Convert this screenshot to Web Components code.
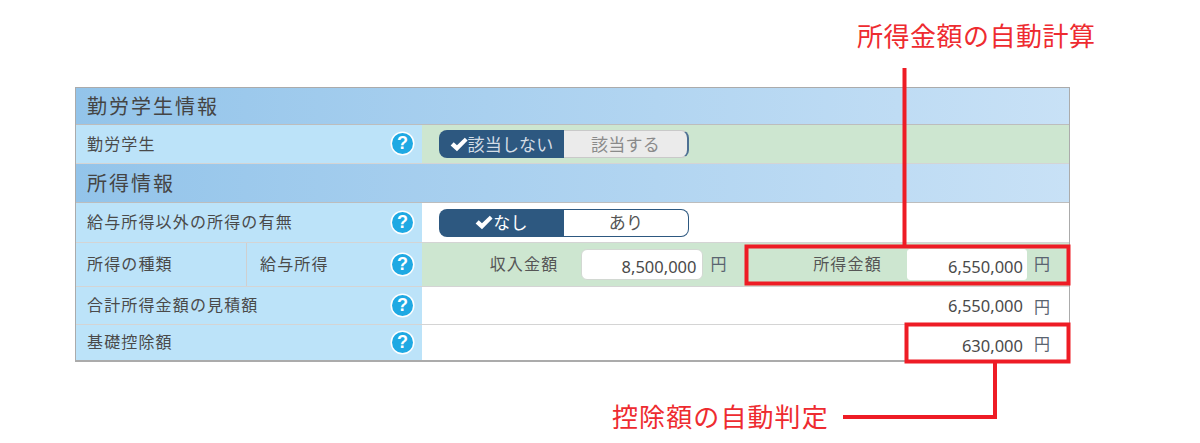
<!DOCTYPE html>
<html lang="ja">
<head>
<meta charset="utf-8">
<title>所得情報</title>
<style>
  html, body { margin: 0; background: #fff; }
  body { font-family: "Noto Sans CJK JP", "Noto Sans", sans-serif; color: #4a4a4a; overflow: hidden; }
</style>
</head>
<body>
<info-page>
  <info-table>
    <section-head style="--h:37px">勤労学生情報</section-head>
    <form-row style="--h:39px" tone="green">
      <span slot="label">勤労学生</span>
      <toggle-pair on="該当しない" off="該当する" muted></toggle-pair>
    </form-row>
    <section-head style="--h:39px">所得情報</section-head>
    <form-row style="--h:40px">
      <span slot="label">給与所得以外の所得の有無</span>
      <toggle-pair on="なし" off="あり"></toggle-pair>
    </form-row>
    <form-row style="--h:44px" tone="green" split>
      <span slot="label">所得の種類</span>
      <span slot="sub">給与所得</span>
      <money-input label="収入金額" value="8,500,000"></money-input>
      <money-input label="所得金額" value="6,550,000" flat></money-input>
    </form-row>
    <form-row style="--h:38px">
      <span slot="label">合計所得金額の見積額</span>
      <money-value value="6,550,000"></money-value>
    </form-row>
    <form-row style="--h:35px" last>
      <span slot="label">基礎控除額</span>
      <money-value value="630,000" low></money-value>
    </form-row>
  </info-table>
  <call-marks></call-marks>
  <call-label style="left:857px;top:16px;letter-spacing:.5px">所得金額の自動計算</call-label>
  <call-label style="left:612px;top:397px;letter-spacing:1.1px">控除額の自動判定</call-label>
</info-page>

<script>
class infoPage extends HTMLElement {
    constructor() {
        super();
        this.attachShadow({mode: "open"}).innerHTML = `
            <style>
                :host { display: block; position: relative; width: 1200px; height: 443px; box-sizing: border-box; padding: 87px 0 0 75px; }
            </style>
            <slot></slot>
        `;
    }
}

class infoTable extends HTMLElement {
    constructor() {
        super();
        this.attachShadow({mode: "open"}).innerHTML = `
            <style>
                :host { display: flex; flex-direction: column; width: 995px; box-sizing: border-box; border: 1px solid #ababab; border-bottom-width: 2px; }
            </style>
            <slot></slot>
        `;
    }
}

class sectionHead extends HTMLElement {
    constructor() {
        super();
        this.attachShadow({mode: "open"}).innerHTML = `
            <style>
                :host {
                    display: flex; align-items: center; height: var(--h); box-sizing: border-box;
                    padding: 0 0 2px 11px; font-size: 20px; letter-spacing: 2px; color: #444;
                    background: linear-gradient(90deg, #93c4ea, #c8e1f6);
                    border-bottom: 1px solid #bdbdbd;
                }
            </style>
            <slot></slot>
        `;
    }
}

class formRow extends HTMLElement {
    constructor() {
        super();
        this.attachShadow({mode: "open"}).innerHTML = `
            <style>
                :host {
                    display: grid; grid-template-columns: 346px 1fr; height: var(--h); box-sizing: border-box;
                    border-bottom: 1px solid #d4d4d4; font-size: 16px; letter-spacing: 1.15px;
                }
                :host([last]) { border-bottom: 0; }
                .head { display: flex; align-items: center; background: #bce3f9; color: #4a4a4a; }
                .main { flex: 1; padding: 0 0 3px 11px; }
                .sub { display: none; width: 128px; align-self: stretch; align-items: center; padding: 0 0 3px 13px; border-left: 1px solid #cfcfcf; }
                :host([split]) .sub { display: flex; }
                :host([split]) .main { flex: none; width: 159px; }
                help-mark { margin: 0 9px 1px auto; }
                .body { display: grid; align-items: center; background: #fff; }
                :host([split]) .body { grid-template-columns: 1fr 1fr; }
                :host([tone="green"]) .body { background: #cde6d0; }
            </style>
            <div class="head">
                <div class="main"><slot name="label"></slot></div>
                <div class="sub"><slot name="sub"></slot></div>
                <help-mark></help-mark>
            </div>
            <div class="body"><slot></slot></div>
        `;
    }
}

class helpMark extends HTMLElement {
    constructor() {
        super();
        this.attachShadow({mode: "open"}).innerHTML = `
            <style>
                :host {
                    display: flex; align-items: center; justify-content: center; width: 21px; height: 21px;
                    border-radius: 50%; background: #1fa9e3; box-shadow: 0 0 0 1.5px #fff;
                    font: bold 18px/21px "Liberation Sans", sans-serif; color: #fff; letter-spacing: 0;
                }
            </style>
            ?
        `;
    }
}

class togglePair extends HTMLElement {
    constructor() {
        super();
        this.attachShadow({mode: "open"}).innerHTML = `
            <style>
                :host {
                    display: flex; width: 250px; height: 28px; margin-left: 17px; box-sizing: border-box;
                    font-size: 17px; letter-spacing: 0.2px; line-height: 1;
                }
                div { display: flex; align-items: center; justify-content: center; width: 125px; box-sizing: border-box; }
                .on { background: #2d5880; color: #fff; border-radius: 8px 0 0 8px; }
                .off {
                    flex: 1; background: #fff; color: #555; border: 1px solid #2d5880; border-left: 0;
                    border-radius: 0 8px 8px 0;
                }
                span { position: relative; top: -1px; }
                :host([muted]) .on span { color: #d4dde6; }
                :host([muted]) .off {
                    background: #ebebeb; color: #8a8a8a; border-color: #c9c9c9; border-right: 2px solid #4d7093;
                }
            </style>
            <div class="on">
                <svg width="18" height="15" viewBox="0 0 17 14"><path d="M0.6 8 L3.5 4.8 L6.6 7.6 L14 0.6 L16.6 3.2 L6.6 13.4 Z" fill="#fff"/></svg>
                <span>${this.getAttribute("on")}</span>
            </div>
            <div class="off"><span>${this.getAttribute("off")}</span></div>
        `;
    }
}

class moneyInput extends HTMLElement {
    constructor() {
        super();
        this.attachShadow({mode: "open"}).innerHTML = `
            <style>
                :host {
                    display: flex; align-items: center; justify-content: flex-end; padding-right: 19px;
                    font-size: 16px; letter-spacing: 1.2px; color: #555;
                }
                .label { margin-bottom: 3px; }
                .box {
                    display: flex; align-items: center; justify-content: flex-end; box-sizing: border-box;
                    width: 122px; height: 31px; margin: 0 7px 0 23px; padding: 3px 6px 0 0;
                    background: #fff; border: 1px solid #d2d8d2; border-radius: 6px;
                    font: 16.5px "Noto Sans", sans-serif; letter-spacing: 0; color: #4a4a4a;
                }
                :host([flat]) .box { width: 120px; margin-left: 25px; padding-right: 3px; border-color: #fff; border-radius: 3px; }
                .yen { margin-bottom: 4px; font-size: 16px; letter-spacing: 0; color: #5a6470; }
            </style>
            <span class="label">${this.getAttribute("label")}</span>
            <div class="box">${this.getAttribute("value")}</div>
            <span class="yen">円</span>
        `;
    }
}

class moneyValue extends HTMLElement {
    constructor() {
        super();
        this.attachShadow({mode: "open"}).innerHTML = `
            <style>
                :host {
                    display: flex; align-items: center; justify-content: flex-end; padding-right: 19px;
                    font: 16.5px "Noto Sans", sans-serif; letter-spacing: 0; color: #4a4a4a;
                }
                :host([low]) .num { margin-top: 5px; }
                .yen { margin-left: 11px; font: 16px "Noto Sans CJK JP", sans-serif; color: #5a6470; }
            </style>
            <span class="num">${this.getAttribute("value")}</span>
            <span class="yen">円</span>
        `;
    }
}

class callMarks extends HTMLElement {
    constructor() {
        super();
        this.attachShadow({mode: "open"}).innerHTML = `
            <style>
                :host { position: absolute; left: 0; top: 0; pointer-events: none; }
                svg { display: block; }
            </style>
            <svg width="1200" height="443" fill="none" stroke="#ee1c25" stroke-width="4">
                <path d="M904.5 68 V246"/>
                <rect x="746.5" y="246.5" width="322" height="37"/>
                <rect x="906.5" y="324.5" width="162" height="37"/>
                <path d="M995 362 V417 H843"/>
            </svg>
        `;
    }
}

class callLabel extends HTMLElement {
    constructor() {
        super();
        this.attachShadow({mode: "open"}).innerHTML = `
            <style>
                :host { position: absolute; font-size: 26px; line-height: 38px; color: #ee2b30; white-space: nowrap; }
            </style>
            <slot></slot>
        `;
    }
}

customElements.define("info-page", infoPage);
customElements.define("info-table", infoTable);
customElements.define("section-head", sectionHead);
customElements.define("form-row", formRow);
customElements.define("help-mark", helpMark);
customElements.define("toggle-pair", togglePair);
customElements.define("money-input", moneyInput);
customElements.define("money-value", moneyValue);
customElements.define("call-marks", callMarks);
customElements.define("call-label", callLabel);
</script>
</body>
</html>
